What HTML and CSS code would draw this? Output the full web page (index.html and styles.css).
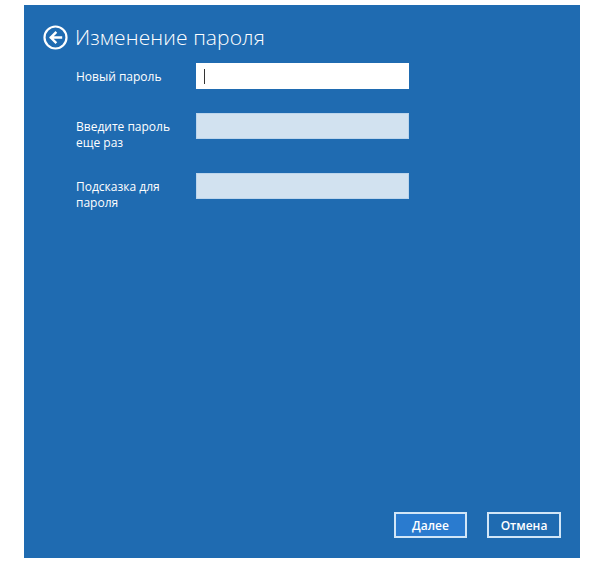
FILE: index.html
```html
<!DOCTYPE html>
<html lang="ru">
<head>
    <meta charset="UTF-8">
    <title>Изменение пароля</title>
    <link rel="stylesheet" href="styles.css">
</head>
<body>
    <div class="dialog">
        <div class="title">
            <svg class="back" width="25" height="25" viewBox="0 0 25 25">
                <circle cx="12.5" cy="12.5" r="11" fill="none" stroke="#fff" stroke-width="2.2"/>
                <path d="M18 12.5H8M12.5 7.8L7.8 12.5l4.7 4.7" fill="none" stroke="#fff" stroke-width="2.4" stroke-linecap="square"/>
            </svg>
            <h1>Изменение пароля</h1>
        </div>

        <div class="form">
            <div class="row">
                <div class="label">Новый пароль</div>
                <div class="field active"><span class="caret"></span></div>
            </div>
            <div class="row">
                <div class="label">Введите пароль<br>еще раз</div>
                <div class="field"></div>
            </div>
            <div class="row">
                <div class="label">Подсказка для<br>пароля</div>
                <div class="field"></div>
            </div>
        </div>

        <div class="actions">
            <button class="btn primary">Далее</button>
            <button class="btn">Отмена</button>
        </div>
    </div>
</body>
</html>
```

FILE: styles.css
```css
body {
    margin: 0;
    padding-top: 5px;
    background-color: #ffffff;
    font-family: "Open Sans", "Noto Sans", Arial, sans-serif;
    color: #ffffff;
}
.dialog {
    margin-left: 24px;
    width: 556px;
    height: 553px;
    box-sizing: border-box;
    padding: 20px 19px 20px 19px;
    background-color: #1f6bb1;
    display: flex;
    flex-direction: column;
}
.title {
    display: flex;
    align-items: center;
    gap: 7px;
    height: 25px;
}
.back {
    display: block;
}
.title h1 {
    margin: 0;
    font-size: 21px;
    font-weight: 300;
    line-height: 25px;
    letter-spacing: 0.1px;
}
.form {
    margin-top: 13px;
    padding-left: 33px;
    display: flex;
    flex-direction: column;
    gap: 22px;
}
.row {
    display: grid;
    grid-template-columns: 120px 213px;
    align-items: start;
    min-height: 28px;
}
.label {
    padding-top: 6px;
    font-size: 12px;
    line-height: 16px;
}
.field {
    height: 26px;
    box-sizing: border-box;
    background-color: #d2e2f0;
    border: 1px solid #bcd5ec;
}
.field.active {
    background-color: #ffffff;
    border-color: #ffffff;
}
.caret {
    display: block;
    width: 1px;
    height: 15px;
    margin: 5px 0 0 7px;
    background-color: #333333;
}
.actions {
    margin-top: auto;
    display: flex;
    justify-content: flex-end;
    gap: 20px;
}
.btn {
    width: 74px;
    height: 26px;
    padding: 0;
    border: 2px solid #d2e6f7;
    background-color: transparent;
    color: #ffffff;
    font-family: "Open Sans", "Noto Sans", Arial, sans-serif;
    font-size: 12px;
    font-weight: 600;
    cursor: pointer;
}
.btn.primary {
    width: 73px;
    background-color: #2a7bcf;
}
```
